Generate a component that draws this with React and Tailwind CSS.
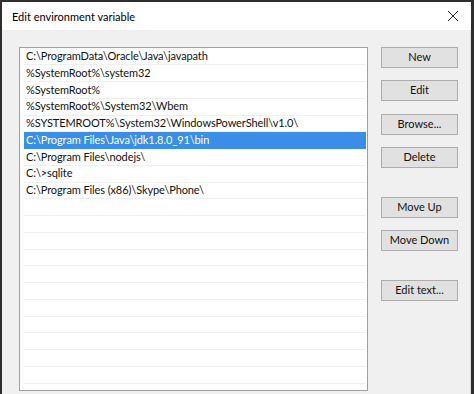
import React from "react";

const rows = [
  "C:\\ProgramData\\Oracle\\Java\\javapath",
  "%SystemRoot%\\system32",
  "%SystemRoot%",
  "%SystemRoot%\\System32\\Wbem",
  "%SYSTEMROOT%\\System32\\WindowsPowerShell\\v1.0\\",
  "C:\\Program Files\\Java\\jdk1.8.0_91\\bin",
  "C:\\Program Files\\nodejs\\",
  "C:\\>sqlite",
  "C:\\Program Files (x86)\\Skype\\Phone\\",
  "", "", "", "", "", "", "", "", "", "", "", "",
];

function Btn({ children, className = "" }) {
  return (
    <div
      className={
        "h-[21px] w-[77px] flex items-center justify-center bg-[#e1e1e1] border border-[#adadad] text-[11px] text-[#111]" +
        " " + className
      }
    >
      {children}
    </div>
  );
}

export default function App() {
  return (
    <div
      className="w-[474px] h-[394px] overflow-hidden bg-[#2e2e2e] pt-[2px] pl-[2px] pr-[3px] flex flex-col"
      style={{ fontFamily: 'Lato, "Noto Sans", sans-serif' }}
    >
      <div className="h-[28px] bg-white flex items-center justify-between pl-[10px] pr-[10px] shrink-0">
        <span className="text-[11px] text-black leading-none">Edit environment variable</span>
        <svg width="12" height="12" viewBox="0 0 12 12" className="mr-[2px]">
          <path d="M1 1 L11 11 M11 1 L1 11" stroke="#222" strokeWidth="1" fill="none" />
        </svg>
      </div>
      <div className="flex-1 min-h-0 bg-[#f0f0f0] flex items-start pl-[17px] pt-[17px] pr-[13px] border-r border-[#dcdcdc]">
        <div className="w-[349px] h-[344px] border border-[#a0a0a0] bg-white overflow-hidden pt-[0.5px] shrink-0">
          {rows.map((r, i) => (
            <div
              key={i}
              className={
                "h-[16.75px] flex items-center ml-[4px] mr-[1px] pl-[2px] text-[11px] tracking-[-0.1px] whitespace-nowrap border-b " +
                (i === 5
                  ? "bg-[#3a8ee6] text-white border-[#3a8ee6]"
                  : "text-[#111] border-[#efefef]")
              }
            >
              {r}
            </div>
          ))}
        </div>
        <div className="ml-[13px] flex flex-col">
          <Btn>New</Btn>
          <Btn className="mt-[12px]">Edit</Btn>
          <Btn className="mt-[13px]">Browse...</Btn>
          <Btn className="mt-[12px]">Delete</Btn>
          <Btn className="mt-[29px]">Move Up</Btn>
          <Btn className="mt-[12px]">Move Down</Btn>
          <Btn className="mt-[29px]">Edit text...</Btn>
        </div>
      </div>
    </div>
  );
}
